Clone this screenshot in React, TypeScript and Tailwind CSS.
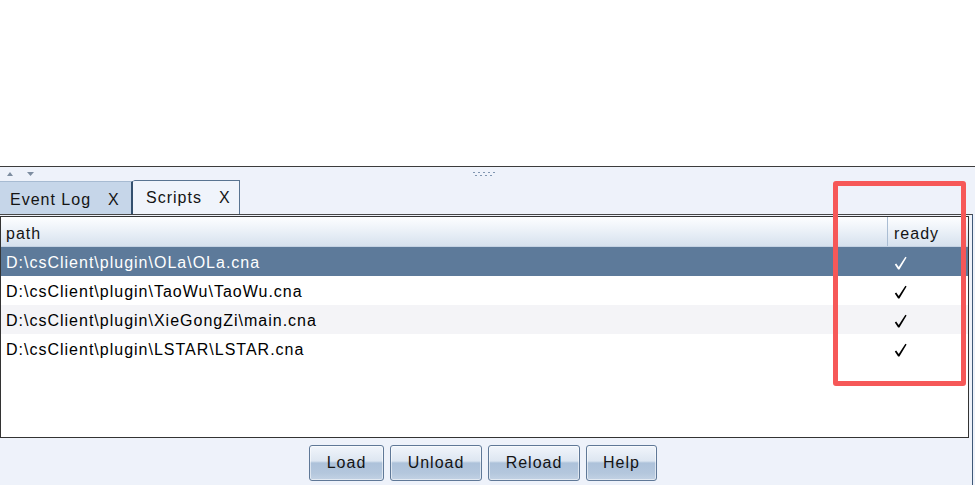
import React from "react";

const rows = [
  { path: "D:\\csClient\\plugin\\OLa\\OLa.cna", ready: true },
  { path: "D:\\csClient\\plugin\\TaoWu\\TaoWu.cna", ready: true },
  { path: "D:\\csClient\\plugin\\XieGongZi\\main.cna", ready: true },
  { path: "D:\\csClient\\plugin\\LSTAR\\LSTAR.cna", ready: true },
];

const font = { fontFamily: '"Liberation Sans", Arial, sans-serif' };

function SplitArrows() {
  return (
    <div className="flex items-center gap-[14px] pl-[7px]">
      <svg width="6" height="4" viewBox="0 0 6 4">
        <path d="M3 0 L6 4 L0 4 Z" fill="#7d8da0" />
      </svg>
      <svg width="7" height="4" viewBox="0 0 7 4">
        <path d="M0 0 L7 0 L3.5 4 Z" fill="#7d8da0" />
      </svg>
    </div>
  );
}

function Grip() {
  const top = [0, 5, 10, 15, 20];
  const bottom = [2, 7, 12, 17];
  return (
    <svg width="23" height="5" viewBox="0 0 23 5">
      {top.map((x) => (
        <rect key={"t" + x} x={x} y={0} width={2} height={1} fill="#7f95b0" />
      ))}
      {bottom.map((x) => (
        <rect key={"b" + x} x={x} y={3} width={2} height={1} fill="#7f95b0" />
      ))}
    </svg>
  );
}

function Check({ color }: { color: string }) {
  return (
    <svg width="13" height="14" viewBox="0 0 13 14">
      <path d="M0.8 8.4 L2.2 7.4 L4.7 10.9 L11.4 0.8 L12.6 1.4 L5.4 13.4 L4.1 13.4 Z" fill={color} />
    </svg>
  );
}

function Btn({ label, w }: { label: string; w: string }) {
  return (
    <button
      className={`${w} h-[36px] rounded-[3px] border border-[#5f7897] text-[16px] tracking-[1px] text-[#141414] shadow-[inset_0_0_0_1px_rgba(255,255,255,0.55)] bg-[linear-gradient(to_bottom,#f1f5fb_0%,#dde6f1_44%,#adc2da_50%,#b4c7dd_80%,#c3d2e4_100%)]`}
      style={font}
    >
      {label}
    </button>
  );
}

export default function App() {
  return (
    <div className="relative w-[975px] h-[485px] overflow-hidden bg-[#eef2fa]" style={font}>
      <div className="h-[166px] bg-white" />
      <div className="border-t border-[#3c3c3c] flex flex-col">
        {/* split pane divider */}
        <div className="h-[13px] grid grid-cols-[1fr_auto_1fr] items-center">
          <SplitArrows />
          <div className="pt-[1px] -translate-x-[3px]">
            <Grip />
          </div>
          <div />
        </div>

        {/* tabs */}
        <div className="h-[34px] flex items-end">
          <div className="mt-[1px] h-[33px] w-[133px] flex items-center pl-[10px] pt-[3px] bg-[#c6d6e9] border-t border-[#a7bbd2] border-r-2 border-r-[#34506e] text-[16px] tracking-[1px] text-[#141414]">
            <span>Event Log</span>
            <span className="ml-[17px]">X</span>
          </div>
          <div className="h-[34px] w-[107px] flex items-center pl-[13px] pt-[1px] bg-[#f0f4fb] border-t border-r border-[#5a7491] rounded-tl-[2px] text-[16px] tracking-[1px] text-[#141414]">
            <span>Scripts</span>
            <span className="ml-[17px]">X</span>
          </div>
        </div>

        {/* tab content */}
        <div className="w-[973px] border-t border-[#474747] border-r border-r-[#3e5877] h-[271px] flex flex-col">
          <div className="pt-[1px]">
            <div className="w-[969px] h-[222px] border border-[#333] bg-white flex flex-col">
              <div className="h-[30px] flex border-b border-[#c4d2e3] bg-[linear-gradient(to_bottom,#fdfeff_0%,#eef3f9_40%,#d6e1ee_100%)] text-[16px] tracking-[1px] text-[#141414]">
                <div className="w-[886px] flex items-center pl-[5px] pt-[4px]">path</div>
                <div className="flex-1 flex items-center pl-[6px] pt-[4px] border-l border-[#aabdd3]">ready</div>
              </div>
              {rows.map((r, i) => {
                const sel = i === 0;
                const bg = sel ? "bg-[#5d7a9a] text-white" : i % 2 === 0 ? "bg-[#f4f4f7] text-black" : "bg-white text-black";
                return (
                  <div key={r.path} className={`h-[29px] flex ${bg} text-[16px] tracking-[1px]`}>
                    <div className="w-[887px] flex items-center pl-[5px] pt-[3px]">{r.path}</div>
                    <div className="flex-1 flex items-center pl-[6px] pt-[2px]">
                      {r.ready ? <Check color={sel ? "#ffffff" : "#000000"} /> : null}
                    </div>
                  </div>
                );
              })}
            </div>
          </div>
          <div className="flex justify-center gap-[6px] pt-[7px] pr-[6px]">
            <Btn label="Load" w="w-[75px]" />
            <Btn label="Unload" w="w-[92px]" />
            <Btn label="Reload" w="w-[92px]" />
            <Btn label="Help" w="w-[71px]" />
          </div>
        </div>
      </div>

      {/* highlight frame around the ready column */}
      <div className="absolute left-[833px] top-[181px] w-[133px] h-[205px] border-[5px] border-[#f65858] rounded-[3px] pointer-events-none" />
    </div>
  );
}
